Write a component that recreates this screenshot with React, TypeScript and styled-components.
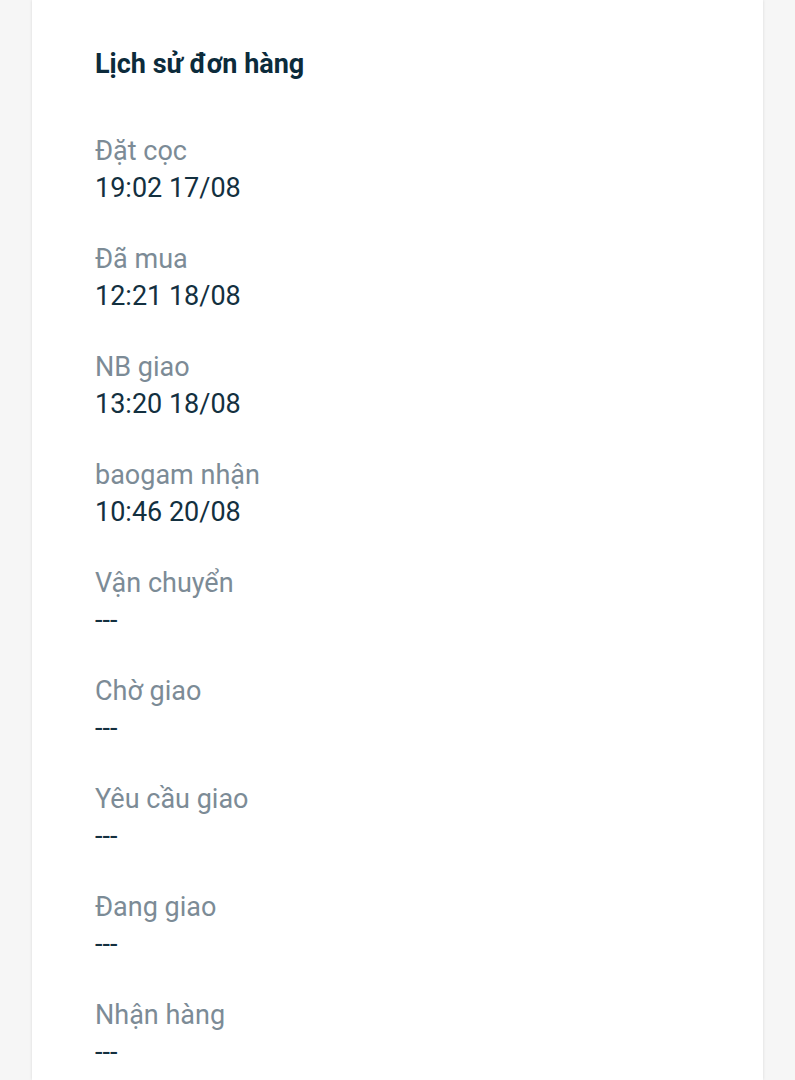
import styled, { createGlobalStyle } from "styled-components";

const GlobalStyle = createGlobalStyle`
  body {
    margin: 0;
    background: #f6f6f6;
    font-family: Roboto, "Noto Sans", sans-serif;
  }
`;

const Page = styled.div`
  padding: 0 32px;
  min-height: 1080px;
`;

const Card = styled.div`
  background: #fff;
  min-height: 1080px;
  padding: 45px 63px 0;
  box-shadow: 0 0 3px rgba(0, 0, 0, 0.12);
  box-sizing: border-box;
`;

const Title = styled.h2`
  margin: 0 0 50px;
  font-size: 27px;
  font-weight: 700;
  line-height: 38px;
  color: #0c2b3b;
`;

const Step = styled.div`
  margin-bottom: 34px;
`;

const Label = styled.div`
  font-size: 27px;
  line-height: 37px;
  color: #7c8b96;
`;

const Value = styled.div`
  font-size: 27px;
  line-height: 37px;
  color: #13303f;
`;

const history = [
  { label: "Đặt cọc", time: "19:02 17/08" },
  { label: "Đã mua", time: "12:21 18/08" },
  { label: "NB giao", time: "13:20 18/08" },
  { label: "baogam nhận", time: "10:46 20/08" },
  { label: "Vận chuyển", time: "" },
  { label: "Chờ giao", time: "" },
  { label: "Yêu cầu giao", time: "" },
  { label: "Đang giao", time: "" },
  { label: "Nhận hàng", time: "" },
];

export default function App() {
  return (
    <>
      <GlobalStyle />
      <Page>
        <Card>
          <Title>Lịch sử đơn hàng</Title>
          {history.map((h) => (
            <Step key={h.label}>
              <Label>{h.label}</Label>
              <Value>{h.time || "---"}</Value>
            </Step>
          ))}
        </Card>
      </Page>
    </>
  );
}
